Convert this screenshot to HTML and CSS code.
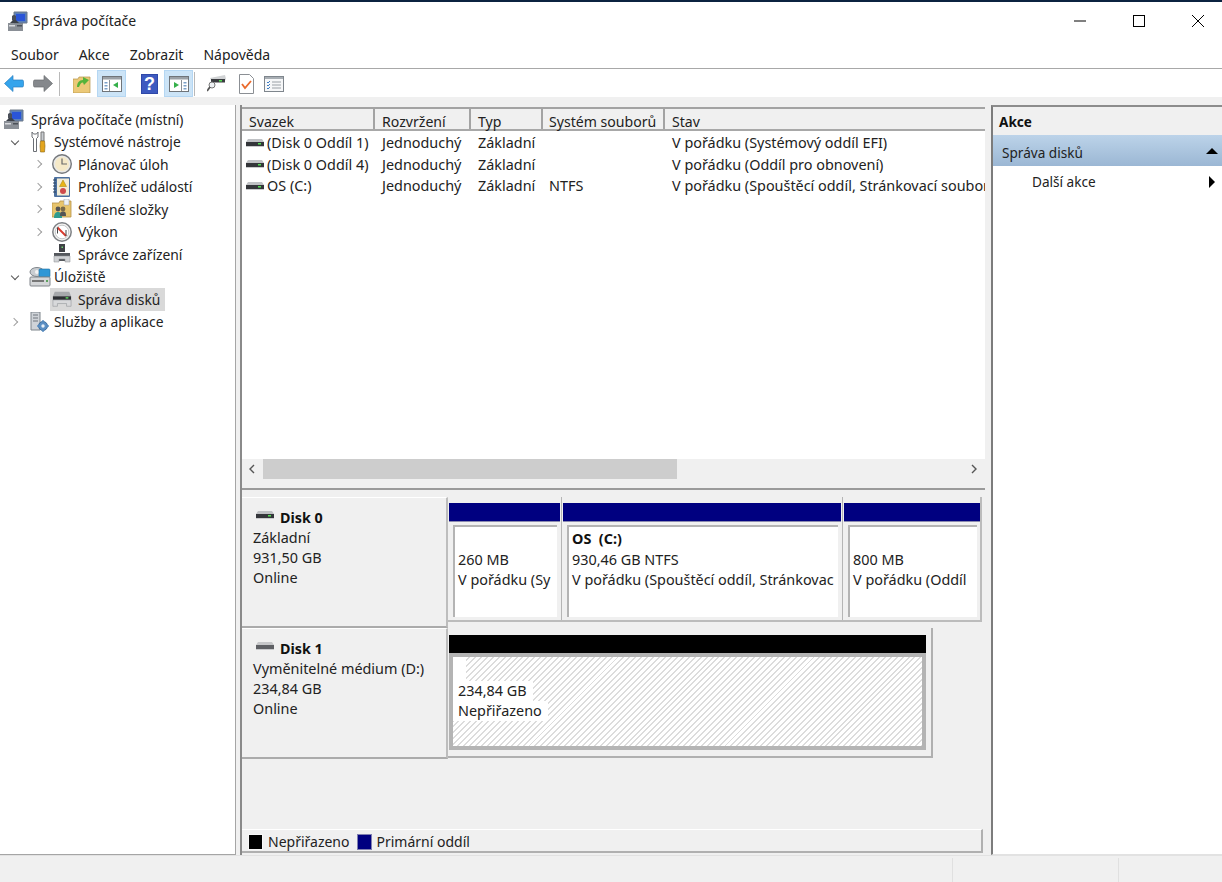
FILE: index.html
```html
<!DOCTYPE html>
<html lang="cs">
<head>
<meta charset="utf-8">
<title>Správa počítače</title>
<link rel="stylesheet" href="styles.css">
</head>
<body>
<svg class="sprite" width="0" height="0" aria-hidden="true">
  <defs>
    <symbol id="i-mgmt" viewBox="0 0 20 20">
      <rect x="0" y="12" width="15" height="8" fill="#8a8f96"/>
      <rect x="1" y="14" width="6" height="1.5" fill="#d8dade"/>
      <rect x="9" y="14" width="5" height="1.5" fill="#4b5058"/>
      <path d="M6 1h13v11H6z" fill="#5a7fb8" stroke="#6f7a88"/>
      <path d="M8 3h9v7H8z" fill="#2a55d8"/>
      <path d="M4 5a3 3 0 0 1 4 0v4a3 3 0 0 1-4 0z" fill="#4a4f58"/>
      <path d="M2 12l3-3h3l3 3z" fill="#3c4048"/>
    </symbol>
    <symbol id="i-tools" viewBox="0 0 18 22">
      <path d="M3 1v5l1.500 1.500v13h3v-13L9 6V1L7.500 3h-3z" fill="#fff" stroke="#6b6f75"/>
      <path d="M12 1h3v9h-3z" fill="#c8ccd0" stroke="#777"/>
      <path d="M11.500 10h4l.5 5-.5 6h-4l-.5-6z" fill="#e3a51e" stroke="#8a6410" stroke-width=".6"/>
    </symbol>
    <symbol id="i-clock" viewBox="0 0 20 20">
      <circle cx="10" cy="10" r="9.300" fill="#e9e9e6" stroke="#75787c" stroke-width="1.400"/>
      <circle cx="10" cy="10" r="7" fill="#f5e9c8"/>
      <path d="M10 4.500V10h5" fill="none" stroke="#6a6a6a" stroke-width="1.200"/>
    </symbol>
    <symbol id="i-log" viewBox="0 0 18 20">
      <rect x="1" y="0" width="16" height="20" rx="1" fill="#4b6f9e"/>
      <rect x="4" y="1.500" width="12" height="17" fill="#f2ecd6"/>
      <path d="M0 3h3M0 6h3M0 9h3M0 12h3M0 15h3" stroke="#2f4460"/>
      <path d="M10 3l3.500 6.500h-7z" fill="#e7b416" stroke="#a07c08" stroke-width=".5"/>
      <circle cx="10" cy="14" r="3" fill="#cf4a4a"/>
    </symbol>
    <symbol id="i-share" viewBox="0 0 20 20">
      <path d="M0 4h7l1-2h11v16H0z" fill="#e8c56d" stroke="#b6934a" stroke-width=".8"/>
      <path d="M12 0h5v6h-5z" fill="#eef2f5" stroke="#99a" stroke-width=".5"/>
      <circle cx="6" cy="10" r="2.400" fill="#555"/>
      <circle cx="11" cy="10" r="2.400" fill="#7a6a4a"/>
      <path d="M2 19c0-5 2-6 4-6s4 1 4 6z" fill="#2f9b8f"/>
      <path d="M8 17c0-4 1-4.500 3-4.500s3 .5 3 4.500z" fill="#555"/>
    </symbol>
    <symbol id="i-perf" viewBox="0 0 20 20">
      <circle cx="10" cy="10" r="9.200" fill="#f4f4f2" stroke="#7d8084" stroke-width="1.500"/>
      <circle cx="10" cy="10" r="6.800" fill="#fff" stroke="#c4c6c8"/>
      <path d="M5.500 5.500L14 14" stroke="#d83a2e" stroke-width="2"/>
      <path d="M5.500 5.500v6M14 14V8" stroke="#444" stroke-width="1"/>
    </symbol>
    <symbol id="i-dev" viewBox="0 0 18 20">
      <path d="M6 0h6v8H6z" fill="#3f4146"/>
      <rect x="8.500" y="2.500" width="1.500" height="1.500" fill="#6fd36f"/>
      <path d="M1 9h16v8H1z" fill="#55585d"/>
      <path d="M1 12h16v6H12v-3H6v3H1z" fill="#cfd1d4" stroke="#8b8e92" stroke-width=".5"/>
    </symbol>
    <symbol id="i-store" viewBox="0 0 22 20">
      <ellipse cx="8" cy="5" rx="7" ry="4.500" fill="#c9cdd1" stroke="#7f858b"/>
      <circle cx="8" cy="5" r="2" fill="#f2f3f4"/>
      <rect x="10" y="2" width="11" height="8" rx="1" fill="#2f97d6" stroke="#1d6fa3" stroke-width=".6"/>
      <rect x="1" y="10" width="20" height="9" rx="1" fill="#d4d6d8" stroke="#80858a"/>
      <rect x="3" y="13" width="12" height="2" fill="#777"/>
      <rect x="17" y="13" width="2" height="2" fill="#5fa35f"/>
    </symbol>
    <symbol id="i-diskmgr" viewBox="0 0 22 18">
      <path d="M3 1h16l2 5H1z" fill="#a6a8ab"/>
      <path d="M1 6h20v4H1z" fill="#2d2f33"/>
      <rect x="15" y="7" width="3" height="1.500" fill="#5fe05f"/>
      <path d="M1 10h20v7h-5v-3H6v3H1z" fill="#d8d9db" stroke="#8f9296" stroke-width=".6"/>
    </symbol>
    <symbol id="i-serv" viewBox="0 0 20 20">
      <path d="M2 0h9v18H2z" fill="#cfd3d8" stroke="#7f858c"/>
      <path d="M4 3h5M4 6h5M4 9h5" stroke="#6f757c"/>
      <circle cx="14" cy="14" r="4.500" fill="#5b8fc4" stroke="#3f6f9f"/>
      <circle cx="14" cy="14" r="1.700" fill="#e8f0f8"/>
      <path d="M14 8v2M14 18v2M8 14h2M18 14h2" stroke="#5b8fc4" stroke-width="1.500"/>
    </symbol>
    <symbol id="i-hd" viewBox="0 0 18 8">
      <path d="M2 0h14l2 3H0z" fill="#bfc1c4"/>
      <path d="M0 3h18v4H0z" fill="#34363a"/>
      <rect x="12" y="4" width="3" height="1.500" fill="#54e054"/>
      <rect x="0" y="7" width="18" height="1" fill="#c9cacc"/>
    </symbol>
    <symbol id="i-hd2" viewBox="0 0 18 8">
      <path d="M2 0h14l2 3H0z" fill="#c6c7c9"/>
      <path d="M0 3h18v4H0z" fill="#5e6064"/>
      <rect x="0" y="7" width="18" height="1" fill="#c9cacc"/>
    </symbol>
    <symbol id="i-pane" viewBox="0 0 20 16">
      <rect x=".5" y=".5" width="19" height="15" fill="#fff" stroke="#6f7479"/>
      <rect x="1" y="1" width="18" height="2.500" fill="#9aa0a6"/>
      <rect x="7" y="4" width="1" height="11" fill="#8a9096"/>
      <rect x="2.500" y="6" width="3" height="1.500" fill="#7ba0c8"/>
      <rect x="2.500" y="9" width="3" height="1.500" fill="#7ba0c8"/>
      <rect x="2.500" y="12" width="3" height="1.500" fill="#7ba0c8"/>
    </symbol>
    <symbol id="i-pane-r" viewBox="0 0 20 16">
      <rect x=".5" y=".5" width="19" height="15" fill="#fff" stroke="#6f7479"/>
      <rect x="1" y="1" width="18" height="2.500" fill="#9aa0a6"/>
      <rect x="12" y="4" width="1" height="11" fill="#8a9096"/>
      <rect x="14.500" y="6" width="3" height="1.500" fill="#7ba0c8"/>
      <rect x="14.500" y="9" width="3" height="1.500" fill="#7ba0c8"/>
      <rect x="14.500" y="12" width="3" height="1.500" fill="#7ba0c8"/>
    </symbol>
  </defs>
</svg>

<div class="window">
  <header class="titlebar">
    <svg class="ic-20 title-icon"><use href="#i-mgmt"/></svg>
    <span class="title-text">Správa počítače</span>
    <div class="winctl">
      <svg class="ctl" viewBox="0 0 12 12"><path d="M0 6h12" stroke="#000" fill="none"/></svg>
      <svg class="ctl" viewBox="0 0 12 12"><rect x=".5" y=".5" width="11" height="11" stroke="#000" fill="none"/></svg>
      <svg class="ctl" viewBox="0 0 12 12"><path d="M0 0l12 12M12 0L0 12" stroke="#000" fill="none"/></svg>
    </div>
  </header>

  <nav class="menubar">
    <span class="menu-item">Soubor</span>
    <span class="menu-item">Akce</span>
    <span class="menu-item">Zobrazit</span>
    <span class="menu-item">Nápověda</span>
  </nav>

  <div class="toolbar">
    <span class="tb"><svg width="20" height="17" viewBox="0 0 20 17"><path d="M9 .5L.5 8.500 9 16.500V12h9c1 0 1.500-.5 1.500-1.500v-4c0-1-.5-1.500-1.500-1.500H9z" fill="#35a4ec" stroke="#2b7fc0" stroke-width=".7"/></svg></span>
    <span class="tb tb-w"><svg width="20" height="17" viewBox="0 0 20 17"><path d="M11 .5l8.500 8-8.500 8V12H2c-1 0-1.500-.5-1.500-1.500v-4C.5 5.500 1 5 2 5h9z" fill="#85888c" stroke="#6a6d70" stroke-width=".7"/></svg></span>
    <span class="tb-sep tb-sep-a"></span>
    <span class="tb"><svg width="18" height="19" viewBox="0 0 18 19"><path d="M0 5h5l1-2h11v16H0z" fill="#ecc978" stroke="#b69448" stroke-width=".7"/><path d="M4 13c0-4 2-7 6-7V3l6 3-5 5-1-2.500c-2 0-3 2-4 4.500z" fill="#55b33a"/></svg></span>
    <span class="tb tb-on"><svg width="20" height="16"><use href="#i-pane"/><path d="M16 6v6l-5-3z" fill="#35b04a"/></svg></span>
    <span class="tb-sep tb-sep-clear"></span>
    <span class="tb tb-help"><svg width="17" height="20" viewBox="0 0 17 20"><rect width="17" height="20" fill="#2f48a8"/><rect x="1" y="1" width="15" height="18" fill="#3d5ac0"/><text x="8.500" y="16" text-anchor="middle" class="help-q">?</text></svg></span>
    <span class="tb tb-on"><svg width="20" height="16"><use href="#i-pane-r"/><path d="M5 6v6l5-3z" fill="#35b04a"/></svg></span>
    <span class="tb-sep tb-sep-b"></span>
    <span class="tb"><svg width="19" height="17" viewBox="0 0 19 17"><path d="M3 3l15-3 1 4-2 3H5z" fill="#d0d2d4"/><rect x="4" y="4" width="14" height="3.500" fill="#3a3c40"/><rect x="12" y="5" width="3" height="1.500" fill="#55dd55"/><circle cx="5" cy="10" r="3" fill="#eef2f5" stroke="#777"/><path d="M3 12l-3 4" stroke="#555" stroke-width="1.800"/></svg></span>
    <span class="tb tb-gap"><svg width="15" height="20" viewBox="0 0 15 20"><path d="M.5.500h10l4 4v15H.5z" fill="#fff" stroke="#8b8f94"/><path d="M3 10l3 4 6-7" fill="none" stroke="#ea6a2c" stroke-width="1.800"/></svg></span>
    <span class="tb"><svg width="20" height="16" viewBox="0 0 20 16"><rect x=".5" y=".5" width="19" height="15" fill="#f6f7f8" stroke="#7f868d"/><rect x="1" y="1" width="18" height="2" fill="#a8aeb4"/><path d="M3 6l1 1 2-2M3 9l1 1 2-2M3 12l1 1 2-2" stroke="#3d7cc4" fill="none"/><path d="M8 6h9M8 9h9M8 12h9" stroke="#9aa0a6"/></svg></span>
  </div>

  <main class="content">
    <aside class="tree">
      <div class="row"><svg class="ic-20 root-icon"><use href="#i-mgmt"/></svg><span class="t-root">Správa počítače (místní)</span></div>
      <div class="row l1"><span class="chev open"></span><svg class="ic-18"><use href="#i-tools"/></svg><span class="t-l1">Systémové nástroje</span></div>
      <div class="row l2"><span class="chev"></span><svg class="ic-20"><use href="#i-clock"/></svg><span class="t-l2">Plánovač úloh</span></div>
      <div class="row l2"><span class="chev"></span><svg class="ic-20"><use href="#i-log"/></svg><span class="t-l2">Prohlížeč událostí</span></div>
      <div class="row l2"><span class="chev"></span><svg class="ic-20"><use href="#i-share"/></svg><span class="t-l2">Sdílené složky</span></div>
      <div class="row l2"><span class="chev"></span><svg class="ic-20"><use href="#i-perf"/></svg><span class="t-l2">Výkon</span></div>
      <div class="row l2"><span class="chev none"></span><svg class="ic-20"><use href="#i-dev"/></svg><span class="t-l2">Správce zařízení</span></div>
      <div class="row l1"><span class="chev open"></span><svg class="ic-22"><use href="#i-store"/></svg><span class="t-l1 t-store">Úložiště</span></div>
      <div class="row l2 selected"><span class="chev none"></span><span class="sel-box"><svg class="ic-20"><use href="#i-diskmgr"/></svg><span class="t-l2">Správa disků</span></span></div>
      <div class="row l1"><span class="chev"></span><svg class="ic-20"><use href="#i-serv"/></svg><span class="t-l1 t-serv">Služby a aplikace</span></div>
    </aside>

    <section class="center">
      <div class="volumes">
        <div class="grid-row head">
          <span class="hc">Svazek</span>
          <span class="hc">Rozvržení</span>
          <span class="hc">Typ</span>
          <span class="hc">Systém souborů</span>
          <span class="hc">Stav</span>
        </div>
        <div class="rows">
          <div class="grid-row">
            <span class="c c-name"><svg class="hd"><use href="#i-hd"/></svg>(Disk 0 Oddíl 1)</span>
            <span class="c">Jednoduchý</span><span class="c">Základní</span><span class="c"></span>
            <span class="c">V pořádku (Systémový oddíl EFI)</span>
          </div>
          <div class="grid-row">
            <span class="c c-name"><svg class="hd"><use href="#i-hd"/></svg>(Disk 0 Oddíl 4)</span>
            <span class="c">Jednoduchý</span><span class="c">Základní</span><span class="c"></span>
            <span class="c">V pořádku (Oddíl pro obnovení)</span>
          </div>
          <div class="grid-row">
            <span class="c c-name"><svg class="hd"><use href="#i-hd"/></svg>OS (C:)</span>
            <span class="c">Jednoduchý</span><span class="c">Základní</span><span class="c">NTFS</span>
            <span class="c">V pořádku (Spouštěcí oddíl, Stránkovací soubor</span>
          </div>
        </div>
        <div class="hscroll">
          <svg class="sb-arrow" viewBox="0 0 8 10"><path d="M6 1L2 5l4 4" fill="none" stroke="#555" stroke-width="1.400"/></svg>
          <div class="sb-track"><div class="sb-thumb"></div></div>
          <svg class="sb-arrow" viewBox="0 0 8 10"><path d="M2 1l4 4-4 4" fill="none" stroke="#555" stroke-width="1.400"/></svg>
        </div>
      </div>

      <div class="disks">
        <div class="disk-row">
          <div class="disk-label">
            <div class="disk-name"><svg class="hd hd-big"><use href="#i-hd"/></svg><b>Disk 0</b></div>
            <div>Základní</div><div>931,50 GB</div><div>Online</div>
          </div>
          <div class="parts">
            <div class="part part-a">
              <div class="bar"></div>
              <div class="part-body"><div class="line">&nbsp;</div><div class="line">260 MB</div><div class="line">V pořádku (Sy</div></div>
            </div>
            <div class="part part-b">
              <div class="bar"></div>
              <div class="part-body"><div class="line"><b>OS &nbsp;(C:)</b></div><div class="line">930,46 GB NTFS</div><div class="line">V pořádku (Spouštěcí oddíl, Stránkovac</div></div>
            </div>
            <div class="part part-c">
              <div class="bar"></div>
              <div class="part-body"><div class="line">&nbsp;</div><div class="line">800 MB</div><div class="line">V pořádku (Oddíl</div></div>
            </div>
          </div>
        </div>
        <div class="disk-row second">
          <div class="disk-label">
            <div class="disk-name"><svg class="hd hd-big"><use href="#i-hd2"/></svg><b>Disk 1</b></div>
            <div>Vyměnitelné médium (D:)</div><div>234,84 GB</div><div>Online</div>
          </div>
          <div class="un-wrap">
            <div class="un-bar"></div>
            <div class="un-frame">
              <div class="hatch">
                <span class="hl hl-blank"></span>
                <span class="hl">234,84 GB</span>
                <span class="hl">Nepřiřazeno</span>
              </div>
            </div>
          </div>
        </div>
        <div class="legend">
          <span class="sw sw-black"></span><span class="lg-text">Nepřiřazeno</span>
          <span class="sw sw-navy"></span><span class="lg-text">Primární oddíl</span>
        </div>
      </div>
    </section>

    <aside class="actions">
      <div class="act-head">Akce</div>
      <div class="act-sec"><span>Správa disků</span><span class="tri-up"></span></div>
      <div class="act-item"><span>Další akce</span><span class="tri-right"></span></div>
    </aside>
  </main>

  <footer class="status">
    <span class="st st-1"></span><span class="st st-2"></span><span class="st st-3"></span>
  </footer>
</div>
</body>
</html>
```

FILE: styles.css
```css
* { box-sizing: border-box; }
html, body { margin: 0; height: 100%; }
body {
  font-family: "Noto Sans", "Open Sans", "Liberation Sans", sans-serif;
  font-size: 13.6px;
  color: #222;
  background: #fff;
  overflow: hidden;
}
.sprite { position: absolute; }
svg { display: block; flex: none; }
.window { display: flex; flex-direction: column; width: 1222px; height: 882px; }

.titlebar {
  height: 40px; flex: none; display: flex; align-items: center;
  border-top: 2px solid #0b2340; padding-left: 8px; padding-bottom: 1px;
}
.ic-20 { width: 20px; height: 20px; }
.ic-18 { width: 18px; height: 22px; }
.ic-22 { width: 22px; height: 20px; }
.title-text { margin-left: 5px; font-size: 14px; }
.winctl { margin-left: auto; display: flex; gap: 47px; padding-right: 18px; }
.ctl { width: 12px; height: 12px; }

.menubar {
  height: 29px; flex: none; display: flex; align-items: center; gap: 20px;
  padding-left: 11px; border-bottom: 1px solid #a8a8a8;
  font-size: 14px;
}

.toolbar { height: 28px; flex: none; display: flex; align-items: center; padding-top: 1px; }
.tb { width: 28px; height: 27px; display: flex; align-items: center; justify-content: center; border: 1px solid transparent; }
.tb-w { width: 30px; }
.tb-gap { margin-left: 2px; }
.tb-on { width: 29px; margin-left: 1px; background: #cce4f7; border-color: #b5d7f3; }
.tb-sep { width: 1px; height: 24px; background: #b9b9b9; }
.tb-sep-a { margin: 0 8px 0 1px; }
.tb-sep-b { margin: 0 7px 0 1px; }
.tb-sep-clear { background: transparent; margin: 0 4px; }
.help-q { font-family: "Liberation Sans", sans-serif; font-size: 18px; font-weight: bold; fill: #fff; }

.content {
  flex: 1; min-height: 0; display: flex; background: #f0f0f0; padding-top: 8px;
}

.tree {
  width: 236px; flex: none; background: #fff; padding-top: 3px; font-size: 13.85px;
  border-right: 1px solid #a5a5a5; border-bottom: 1px solid #a5a5a5;
}
.row { height: 22.5px; display: flex; align-items: center; white-space: nowrap; }
.root-icon { margin-left: 4px; }
.t-root { margin-left: 7px; font-size: 13.7px; }
.chev { width: 8px; height: 8px; flex: none; position: relative; }
.chev::before {
  content: ""; display: block; width: 5px; height: 5px; margin: 1px 0 0 0;
  border-right: 1px solid #a0a0a0; border-top: 1px solid #a0a0a0; transform: rotate(45deg);
}
.chev.open::before { border-color: #555; transform: rotate(135deg); margin: 0 0 0 1px; }
.chev.none::before { display: none; }
.l1 { padding-left: 11px; }
.l1 .chev { margin-right: 10px; }
.l1 .ic-20 { margin-right: 4px; }
.t-l1 { margin-left: 7px; }
.t-store { margin-left: 3px; }
.t-serv { margin-left: 1px; }
.l2 { padding-left: 35px; }
.l2 .chev { margin-right: 9px; }
.t-l2 { margin-left: 6px; }
.sel-box { display: flex; align-items: center; background: #d9d9d9; height: 23px; margin-left: -2px; padding: 0 5px 0 2px; }

.center {
  width: 745px; flex: none; margin-left: 4px; display: flex; flex-direction: column;
  border-left: 2px solid #8a8a8a; font-size: 14.4px;
}
.volumes { flex: none; background: #f0f0f0; display: flex; flex-direction: column; height: 374px; padding-top: 2px; }
.grid-row { display: grid; grid-template-columns: 133px 96px 72px 122px 320px; white-space: nowrap; }
.head { height: 24px; flex: none; background: #f0f0f0; border-top: 2px solid #a3a3a3; border-bottom: 2px solid #a8a8a8; font-size: 14.1px; }
.hc { height: 20px; padding-left: 7px; line-height: 25px; border-right: 2px solid #a3a3a3; }
.hc:nth-child(4) { padding-left: 6px; }
.hc:last-child { border-right: 0; }
.rows { flex: 1; padding-top: 1px; background: #fff; }
.rows .grid-row { height: 21.6px; align-items: center; }
.c { padding-left: 7px; overflow: hidden; }
.c:nth-child(4) { padding-left: 6px; }
.c-name { display: flex; align-items: center; padding-left: 4px; }
.hd { width: 18px; height: 8px; margin-right: 3px; }
.hd-big { margin: 0 6px 6px 0; }

.hscroll { height: 20px; flex: none; display: flex; align-items: center; background: #f0f0f0; }
.sb-arrow { width: 8px; height: 10px; margin: 0 7px; }
.sb-arrow:first-child { margin-left: 6px; }
.sb-track { flex: 1; height: 20px; }
.sb-thumb { width: 414px; height: 20px; background: #cdcdcd; }

.disks { flex: 1; display: flex; flex-direction: column; min-height: 0; background: #f0f0f0; border-top: 2px solid #9a9a9a; margin-top: 9px; padding-top: 7px; }
.disk-row { height: 131px; flex: none; display: flex; }
.disk-label {
  width: 206px; flex: none; padding: 10px 0 0 11px; line-height: 20px;
  border-top: 1px solid #fff; border-right: 2px solid #bdbdbd; border-bottom: 2px solid #ababab;
}
.disk-name { display: flex; align-items: center; padding-left: 3px; }
.disk-name b { color: #111; font-size: 14.3px; }

.parts { width: 534px; flex: none; display: flex; height: 125px; border-bottom: 2px solid #bcbcbc; border-right: 2px solid #bcbcbc; padding-left: 1px; }
.part { padding-top: 6px; border-right: 1px solid #b5b5b5; padding-right: 1px; }
.part:last-child { border-right: 0; padding-right: 0; }
.part-a { width: 113px; }
.part-b { width: 281px; padding-left: 1px; }
.part-c { flex: 1; padding-left: 1px; }
.bar { height: 19px; background: #000080; border-bottom: 1px solid #8a8ab0; }
.part-body {
  margin: 3px 3px 0 4px; height: 92px; background: #fff;
  border-top: 2px solid #b4b4b4; border-left: 2px solid #b4b4b4;
  padding: 2px 0 0 3px; overflow: hidden; white-space: nowrap;
}
.line { height: 20.5px; line-height: 20.5px; }
.line b { font-weight: 700; color: #111; }

.un-wrap { width: 485px; flex: none; height: 130px; border-right: 2px solid #b0b0b0; border-bottom: 2px solid #b0b0b0; padding: 7px 5px 0 1px; }
.un-bar { height: 18px; background: #000; }
.un-frame { border: 4px solid #b4b4b4; height: 97px; }
.hatch {
  height: 89px; overflow: hidden; display: flex; flex-direction: column; align-items: flex-start;
  background: repeating-linear-gradient(-45deg, #dcdcdc 0, #dcdcdc 1.4px, #fff 1.4px, #fff 4.2px);
}
.hl { background: #fff; padding: 0 6px 0 5px; line-height: 20px; height: 20px; }
.hl-blank { width: 13px; height: 24px; padding: 0; }

.legend {
  margin-top: auto; height: 24px; width: 741px; flex: none; display: flex; align-items: center; font-size: 14px;
  border-top: 1px solid #fff; border-bottom: 2px solid #b0b0b0; border-right: 2px solid #b0b0b0; padding: 2px 0 0 6px; margin-bottom: 2px;
}
.sw { width: 15px; height: 16px; border: 1px solid #c8c8c8; margin-right: 5px; }
.sw-black { background: #000; border-color: #f8f8f8; }
.sw-navy { background: #000080; border-color: #8080b0; margin-left: 7px; }

.actions {
  margin-left: 6px; flex: 1; background: #fff; border-left: 2px solid #7c7c7c; border-top: 2px solid #8c8c8c; border-bottom: 1px solid #e2e2e2;
}
.act-head { height: 28px; background: #f0f0f0; padding: 5px 0 0 6px; font-weight: 700; font-size: 13.6px; color: #111; }
.act-sec { height: 31px; display: flex; align-items: center; padding: 3px 4px 0 9px; background: linear-gradient(#bcd3e9, #9bb7d4); justify-content: space-between; }
.tri-up { width: 0; height: 0; border-left: 6.500px solid transparent; border-right: 6.500px solid transparent; border-bottom: 6px solid #000; margin-bottom: 3px; }
.act-item { height: 31px; display: flex; align-items: center; padding: 0 7px 0 39px; justify-content: space-between; }
.tri-right { width: 0; height: 0; border-top: 6.500px solid transparent; border-bottom: 6.500px solid transparent; border-left: 6px solid #000; }

.status { height: 27px; flex: none; background: #f0f0f0; display: flex; border-top: 1px solid #e2e2e2; padding-top: 2px; }
.st { display: block; border-right: 1px solid #e0e0e0; }
.st-1 { width: 953px; }
.st-2 { width: 166px; }
.st-3 { flex: 1; border-right: 0; }
```
